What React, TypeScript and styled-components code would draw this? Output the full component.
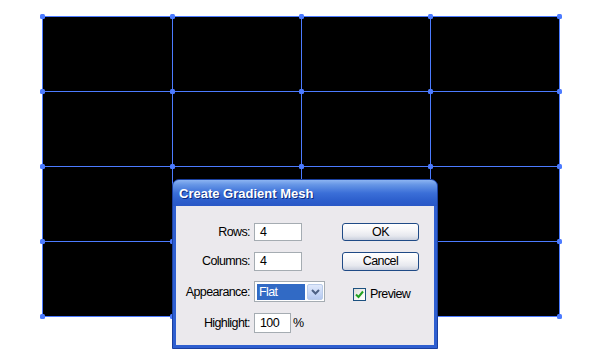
import React from 'react';
import styled, { createGlobalStyle } from 'styled-components';

const Global = createGlobalStyle`
  html, body { margin: 0; padding: 0; background: #fff; }
  body { width: 600px; height: 359px; overflow: hidden; }
`;

const UI_FONT = `"Liberation Sans", Arial, sans-serif`;

const Canvas = styled.div`
  position: relative;
  width: 600px;
  height: 359px;
  background: #fff;
`;

const Art = styled.svg`
  display: block;
`;

const Dialog = styled.div`
  position: absolute;
  left: 172px;
  top: 179px;
  width: 266px;
  height: 170px;
  box-sizing: border-box;
  display: flex;
  flex-direction: column;
  background: #2f5fd0;
  border: 1px solid #1b3f9e;
  border-radius: 7px 7px 0 0;
  overflow: hidden;
`;

const TitleBar = styled.div`
  height: 26px;
  flex: none;
  display: flex;
  align-items: center;
  padding: 1px 0 0 6px;
  box-sizing: border-box;
  background: linear-gradient(
    180deg,
    #8cb4f2 0%,
    #6696e6 18%,
    #3b6fd8 50%,
    #2c5ecc 80%,
    #2957c6 100%
  );
  color: #fff;
  font-family: "Liberation Sans", Arial, sans-serif;
  font-weight: bold;
  font-size: 13px;
  text-shadow: 1px 1px 0 #0d2c82;
`;

const Body = styled.div`
  flex: 1;
  margin: 0 3px 3px 3px;
  background: #ebe9ed;
  display: grid;
  grid-template-columns: 75px 85px 77px;
  grid-template-rows: 18px 19px 21px 20px;
  column-gap: 3px;
  row-gap: 10.5px;
  padding-top: 17px;
  align-content: start;
  font-family: ${UI_FONT};
  font-size: 12.5px;
  letter-spacing: -0.6px;
  color: #000;
`;

const Label = styled.div`
  display: flex;
  align-items: center;
  justify-content: flex-end;
  white-space: nowrap;
  padding-right: 1px;
`;

const Field = styled.div`
  display: flex;
  align-items: center;
  gap: 2px;
`;

const TextBox = styled.div<{ $w: number; $h: number }>`
  box-sizing: border-box;
  width: ${(p) => p.$w}px;
  height: ${(p) => p.$h}px;
  border: 1px solid #a5acb2;
  background: #fff;
  display: flex;
  align-items: center;
  padding-left: 5px;
`;

const Select = styled.div`
  box-sizing: border-box;
  width: 71px;
  height: 21px;
  border: 1px solid #a5acb2;
  background: #fff;
  display: flex;
  align-items: stretch;
  padding: 2px 1px 1px 2px;
  gap: 2px;
`;

const SelectValue = styled.div`
  flex: 1;
  background: #316ac5;
  color: #fff;
  display: flex;
  align-items: center;
  padding-left: 2px;
`;

const DropButton = styled.div`
  width: 16px;
  box-sizing: border-box;
  border: 1px solid #b9cbe9;
  border-radius: 2px;
  background: linear-gradient(180deg, #e0e9fb 0%, #c6d6f6 60%, #b5c8ef 100%);
  display: flex;
  align-items: center;
  justify-content: center;
`;

const Button = styled.div<{ $h: number }>`
  box-sizing: border-box;
  width: 77px;
  height: ${(p) => p.$h}px;
  border: 1px solid #1f4a86;
  border-radius: 3px;
  background: linear-gradient(
    180deg,
    #ffffff 0%,
    #f6f6f8 40%,
    #e6e8ee 75%,
    #c9cfdd 100%
  );
  display: flex;
  align-items: center;
  justify-content: center;
`;

const CheckRow = styled.label`
  display: flex;
  align-items: center;
  gap: 4px;
  padding-left: 11px;
  padding-top: 5px;
`;

const CheckBox = styled.span`
  box-sizing: border-box;
  width: 13px;
  height: 13px;
  border: 1px solid #1c5180;
  background: linear-gradient(135deg, #dcdcd7 0%, #f6f6f4 60%, #ffffff 100%);
  display: flex;
  align-items: center;
  justify-content: center;
`;

const Empty = styled.div``;

const xs = [42, 172, 301, 430, 559];
const ys = [16, 91, 166, 241, 316];

function Mesh() {
  const line = '#4c7bff';
  return (
    <Art width={600} height={359} viewBox="0 0 600 359">
      <rect x={42} y={16} width={517} height={300} fill="#000" />
      {xs.map((x) => (
        <line
          key={'v' + x}
          x1={x + 0.5}
          y1={16}
          x2={x + 0.5}
          y2={317}
          stroke={line}
          strokeWidth={1}
        />
      ))}
      {ys.map((y) => (
        <line
          key={'h' + y}
          x1={42}
          y1={y + 0.5}
          x2={560}
          y2={y + 0.5}
          stroke={line}
          strokeWidth={1}
        />
      ))}
      {xs.map((x) =>
        ys.map((y) => (
          <rect
            key={x + '-' + y}
            x={x - 2}
            y={y - 2}
            width={5}
            height={5}
            rx={1.5}
            fill={line}
          />
        ))
      )}
    </Art>
  );
}

export default function App() {
  return (
    <>
      <Global />
      <Canvas>
        <Mesh />
        <Dialog>
          <TitleBar>Create Gradient Mesh</TitleBar>
          <Body>
            <Label>Rows:</Label>
            <Field>
              <TextBox $w={48} $h={18}>4</TextBox>
            </Field>
            <Button $h={18}>OK</Button>

            <Label>Columns:</Label>
            <Field>
              <TextBox $w={48} $h={19}>4</TextBox>
            </Field>
            <Button $h={19}>Cancel</Button>

            <Label>Appearance:</Label>
            <Field>
              <Select>
                <SelectValue>Flat</SelectValue>
                <DropButton>
                  <svg width="9" height="6" viewBox="0 0 9 6">
                    <path
                      d="M1 1 L4.5 4.5 L8 1"
                      fill="none"
                      stroke="#4d6185"
                      strokeWidth="2"
                    />
                  </svg>
                </DropButton>
              </Select>
            </Field>
            <CheckRow>
              <CheckBox>
                <svg width="9" height="9" viewBox="0 0 9 9">
                  <path
                    d="M1 4.5 L3.5 7 L8 1.5"
                    fill="none"
                    stroke="#21a121"
                    strokeWidth="2"
                  />
                </svg>
              </CheckBox>
              Preview
            </CheckRow>

            <Label>Highlight:</Label>
            <Field>
              <TextBox $w={37} $h={20}>100</TextBox>
              <span>%</span>
            </Field>
            <Empty />
          </Body>
        </Dialog>
      </Canvas>
    </>
  );
}
